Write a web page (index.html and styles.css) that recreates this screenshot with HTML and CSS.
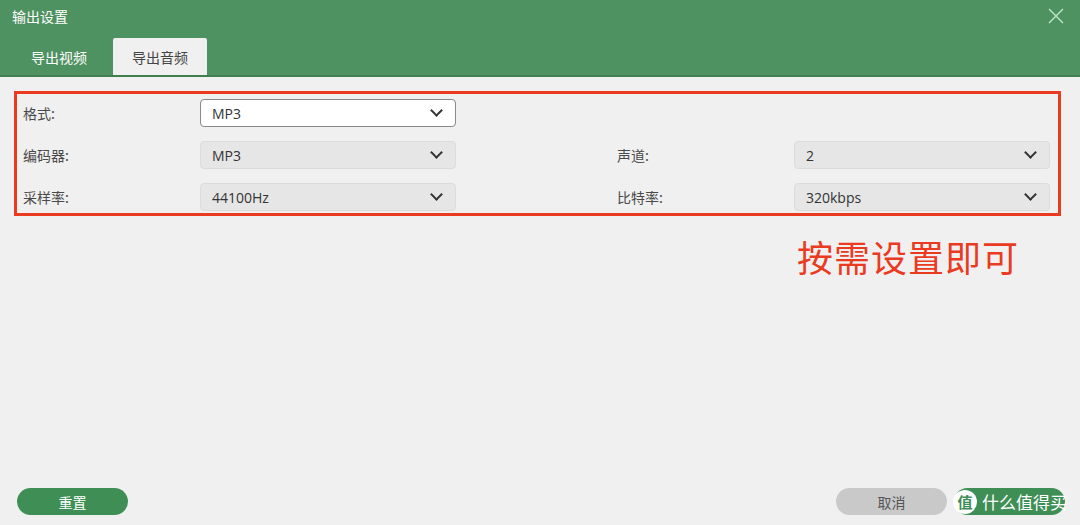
FILE: index.html
```html
<!DOCTYPE html>
<html lang="zh-CN">
<head>
    <meta charset="UTF-8">
    <title>输出设置</title>
    <link rel="stylesheet" href="styles.css">
</head>
<body>
    <div class="dialog">
        <div class="header">
            <div class="title-row">
                <span class="title">输出设置</span>
                <span class="close">
                    <svg width="16" height="16" viewBox="0 0 16 16"><path d="M1 1L15 15M15 1L1 15" stroke="#bfe8cb" stroke-width="1.4" fill="none"/></svg>
                </span>
            </div>
            <div class="tabs">
                <div class="tab">导出视频</div>
                <div class="tab active">导出音频</div>
            </div>
        </div>

        <div class="content">
            <div class="settings">
                <div class="row">
                    <div class="field">
                        <label>格式:</label>
                        <div class="select white"><span>MP3</span><i class="arrow"></i></div>
                    </div>
                </div>
                <div class="row">
                    <div class="field">
                        <label>编码器:</label>
                        <div class="select"><span>MP3</span><i class="arrow"></i></div>
                    </div>
                    <div class="field">
                        <label>声道:</label>
                        <div class="select"><span>2</span><i class="arrow"></i></div>
                    </div>
                </div>
                <div class="row">
                    <div class="field">
                        <label>采样率:</label>
                        <div class="select"><span>44100Hz</span><i class="arrow"></i></div>
                    </div>
                    <div class="field">
                        <label>比特率:</label>
                        <div class="select"><span>320kbps</span><i class="arrow"></i></div>
                    </div>
                </div>
            </div>

            <div class="note">按需设置即可</div>
        </div>

        <div class="footer">
            <button class="btn green">重置</button>
            <div class="right-btns">
                <button class="btn grey">取消</button>
                <button class="btn green ok">
                    <span class="mark"><b>值</b><span>什么值得买</span></span>
                </button>
            </div>
        </div>
    </div>
</body>
</html>
```

FILE: styles.css
```css
*{
    box-sizing: border-box;
    margin: 0;
    padding: 0;
}

body{
    width: 1080px;
    height: 525px;
    overflow: hidden;
    background: #f0f0f0;
    font-family: "Noto Sans CJK SC", "Noto Sans", sans-serif;
    color: #333;
}

.dialog{
    height: 525px;
    display: flex;
    flex-direction: column;
}

.header{
    background: #4f9262;
    border-bottom: 2px solid #3f7f50;
}

.title-row{
    height: 38px;
    display: flex;
    justify-content: space-between;
    align-items: center;
    padding: 0 16px 6px 12px;
}

.title{
    color: #fff;
    font-size: 14px;
}

.close{
    display: flex;
}

.tabs{
    display: flex;
    padding-left: 17px;
}

.tab{
    width: 84px;
    height: 37px;
    margin-right: 12px;
    display: flex;
    justify-content: center;
    align-items: center;
    font-size: 14px;
    color: #fff;
    border-radius: 2px 2px 0 0;
}

.tab.active{
    width: 94px;
    background: #f0f0f0;
    color: #444;
}

.content{
    flex: 1;
    padding: 14px 19px 0 14px;
}

.settings{
    border: 3px solid #ea3a1f;
    padding: 5px 8px 2px 6px;
    display: flex;
    flex-direction: column;
    gap: 14px;
}

.row{
    display: flex;
    height: 28px;
    align-items: center;
}

.field{
    flex: none;
    width: 594px;
    display: flex;
    align-items: center;
}

.field + .field{
    width: auto;
}

.field label{
    width: 177px;
    font-size: 14px;
    color: #4a4a4a;
}

.select{
    width: 256px;
    height: 28px;
    border: 1px solid #dcdcdc;
    border-radius: 4px;
    background: #e6e6e6;
    display: flex;
    justify-content: space-between;
    align-items: center;
    padding: 0 10px 0 11px;
    font-family: "Open Sans", "Liberation Sans", sans-serif;
    font-size: 14px;
    color: #333;
}

.select.white{
    background: #fff;
    border: 1px solid #8a8a8a;
}

.arrow{
    width: 9px;
    height: 9px;
    border-right: 2px solid #333;
    border-bottom: 2px solid #333;
    transform: rotate(45deg);
    margin: -5px 4px 0 0;
}

.note{
    margin: 14px 0 0 783px;
    font-size: 36px;
    color: #ea3a1f;
    letter-spacing: 1px;
}

.footer{
    height: 37px;
    display: flex;
    justify-content: space-between;
    align-items: flex-start;
    padding: 0 15px 0 17px;
}

.right-btns{
    display: flex;
    gap: 7px;
}

.btn{
    width: 111px;
    height: 27px;
    border: 0;
    border-radius: 14px;
    font-family: "Noto Sans CJK SC", sans-serif;
    font-size: 14px;
    color: #fff;
}

.btn.green{
    background: #3e8e55;
}

.btn.grey{
    background: #c9c9c9;
    color: #555;
}

.btn.ok{
    position: relative;
}

/* watermark laid over the confirm button */
.mark{
    position: absolute;
    left: -1px;
    top: 1px;
    white-space: nowrap;
    font-size: 17px;
    color: #fff;
    display: flex;
    align-items: center;
    gap: 5px;
}

.mark b{
    width: 24px;
    height: 24px;
    border-radius: 50%;
    background: #fff;
    color: #3e8e55;
    font-size: 15px;
    display: flex;
    justify-content: center;
    align-items: center;
}
```
